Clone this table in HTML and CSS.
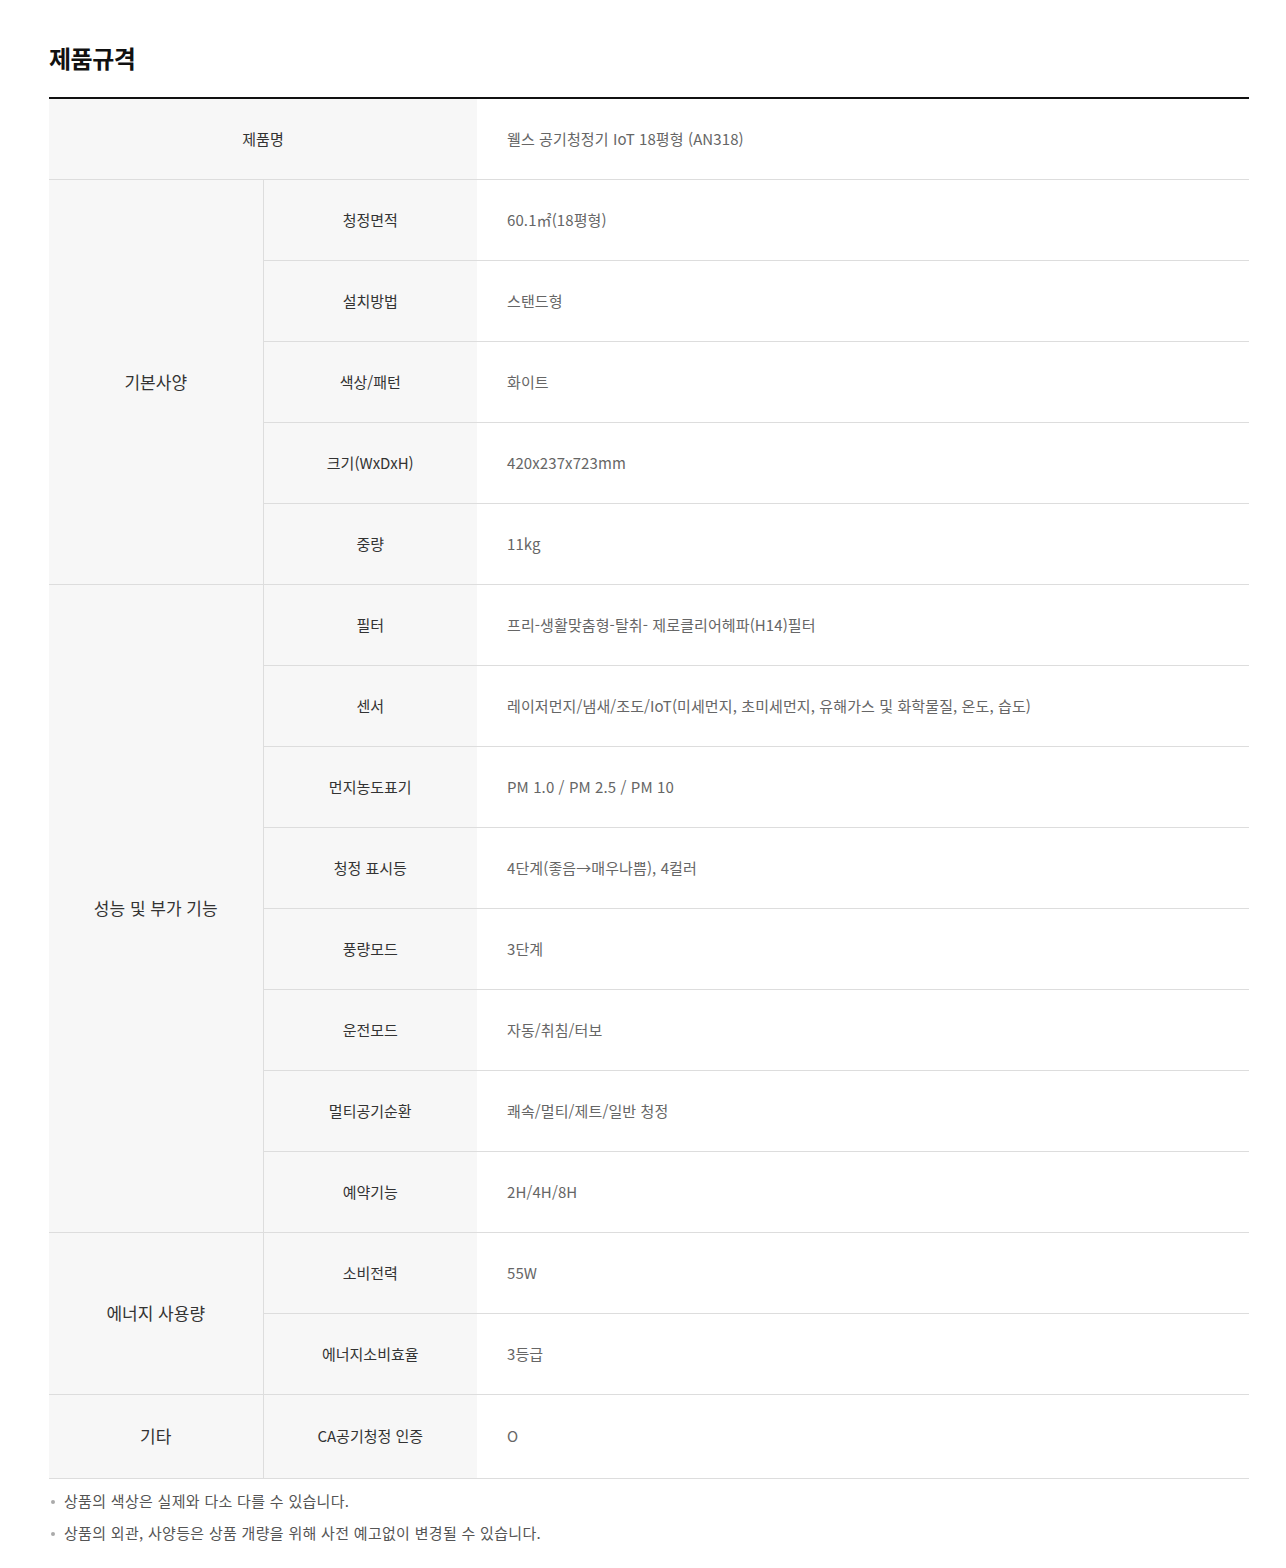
FILE: index.html
```html
<!DOCTYPE html>
<html lang="ko">
<head>
<meta charset="utf-8">
<title>제품규격</title>
<link rel="stylesheet" href="styles.css">
</head>
<body>
<div class="wrap">
  <h2 class="title">제품규격</h2>
  <table class="spec">
    <colgroup>
      <col class="c1"><col class="c2"><col class="c3">
    </colgroup>
    <tbody>
      <tr><th colspan="2">제품명</th><td>웰스 공기청정기 IoT 18평형 (AN318)</td></tr>
      <tr><th rowspan="5" class="grp">기본사양</th><th>청정면적</th><td>60.1㎡(18평형)</td></tr>
      <tr><th>설치방법</th><td>스탠드형</td></tr>
      <tr><th>색상/패턴</th><td>화이트</td></tr>
      <tr><th>크기(WxDxH)</th><td>420x237x723mm</td></tr>
      <tr><th>중량</th><td>11kg</td></tr>
      <tr><th rowspan="8" class="grp">성능 및 부가 기능</th><th>필터</th><td>프리-생활맞춤형-탈취- 제로클리어헤파(H14)필터</td></tr>
      <tr><th>센서</th><td>레이저먼지/냄새/조도/IoT(미세먼지, 초미세먼지, 유해가스 및 화학물질, 온도, 습도)</td></tr>
      <tr><th>먼지농도표기</th><td>PM 1.0 / PM 2.5 / PM 10</td></tr>
      <tr><th>청정 표시등</th><td>4단계(좋음→매우나쁨), 4컬러</td></tr>
      <tr><th>풍량모드</th><td>3단계</td></tr>
      <tr><th>운전모드</th><td>자동/취침/터보</td></tr>
      <tr><th>멀티공기순환</th><td>쾌속/멀티/제트/일반 청정</td></tr>
      <tr><th>예약기능</th><td>2H/4H/8H</td></tr>
      <tr><th rowspan="2" class="grp">에너지 사용량</th><th>소비전력</th><td>55W</td></tr>
      <tr><th>에너지소비효율</th><td>3등급</td></tr>
      <tr class="last"><th class="grp">기타</th><th>CA공기청정 인증</th><td>O</td></tr>
    </tbody>
  </table>
  <ul class="notes">
    <li>상품의 색상은 실제와 다소 다를 수 있습니다.</li>
    <li>상품의 외관, 사양등은 상품 개량을 위해 사전 예고없이 변경될 수 있습니다.</li>
  </ul>
</div>
</body>
</html>
```

FILE: styles.css
```css
html, body {
  margin: 0;
  padding: 0;
  background: #fff;
}
body {
  font-family: "Noto Sans CJK KR", "Noto Sans", sans-serif;
  color: #333;
}
.wrap {
  width: 1200px;
  padding: 40px 0 0 49px;
}
.title {
  margin: 0 0 21px;
  font-size: 24px;
  line-height: 36px;
  font-weight: 700;
  color: #111;
  letter-spacing: -0.5px;
}
.spec {
  width: 1200px;
  border-collapse: collapse;
  border-top: 2px solid #111;
  table-layout: fixed;
}
.spec col.c1 { width: 214px; }
.spec col.c2 { width: 214px; }
.spec col.c3 { width: auto; }
.spec th,
.spec td {
  padding: 0;
  border-bottom: 1px solid #ddd;
  font-size: 15px;
  line-height: 22px;
  vertical-align: middle;
  box-sizing: border-box;
}
.spec tr > * { height: 81px; }
.spec th {
  background: #f7f7f7;
  font-weight: 400;
  color: #333;
  text-align: center;
}
.spec th.grp {
  border-right: 1px solid #ddd;
  font-size: 17px;
}
.spec td {
  color: #666;
  text-align: left;
  padding-left: 30px;
  letter-spacing: 0.1px;
}
.spec tr.last > * { height: 84px; }
.notes {
  list-style: none;
  margin: 6px 0 0;
  padding: 0;
}
.notes li {
  position: relative;
  padding-left: 15px;
  font-size: 15px;
  line-height: 32px;
  color: #555;
  letter-spacing: 0.3px;
}
.notes li::before {
  content: "";
  position: absolute;
  left: 2px;
  top: 15px;
  width: 4px;
  height: 4px;
  border-radius: 50%;
  background: #aaa;
}
```
